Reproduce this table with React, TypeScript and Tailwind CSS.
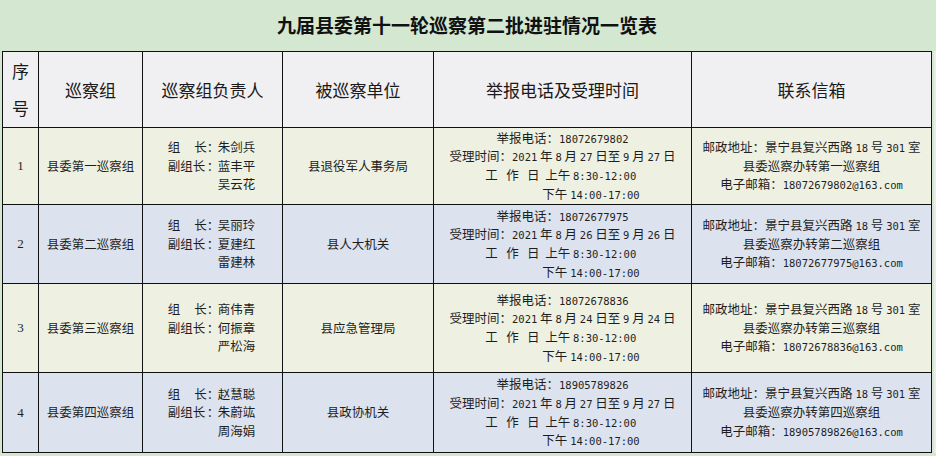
const groups = [
  {
    no: '1',
    name: '县委第一巡察组',
    leader: '朱剑兵',
    deputies: ['蓝丰平', '吴云花'],
    unit: '县退役军人事务局',
    phone: '18072679802',
    from: '8 月 27 日',
    to: '9 月 27 日',
    groupName: '第一巡察组',
    bg: 'bg-[#eef1e2]',
    h: 'h-[77px]',
  },
  {
    no: '2',
    name: '县委第二巡察组',
    leader: '吴丽玲',
    deputies: ['夏建红', '雷建林'],
    unit: '县人大机关',
    phone: '18072677975',
    from: '8 月 26 日',
    to: '9 月 26 日',
    groupName: '第二巡察组',
    bg: 'bg-[#dce3ef]',
    h: 'h-[79px]',
  },
  {
    no: '3',
    name: '县委第三巡察组',
    leader: '商伟青',
    deputies: ['何振章', '严松海'],
    unit: '县应急管理局',
    phone: '18072678836',
    from: '8 月 24 日',
    to: '9 月 24 日',
    groupName: '第三巡察组',
    bg: 'bg-[#eef1e2]',
    h: 'h-[89px]',
  },
  {
    no: '4',
    name: '县委第四巡察组',
    leader: '赵慧聪',
    deputies: ['朱蔚竑', '周海娟'],
    unit: '县政协机关',
    phone: '18905789826',
    from: '8 月 27 日',
    to: '9 月 27 日',
    groupName: '第四巡察组',
    bg: 'bg-[#dce3ef]',
    h: 'h-[80px]',
  },
]

const font = "font-['Noto_Sans_CJK_SC',sans-serif]"

// half-width runs (digits, latin) get a narrow mono face, like the original sheet
function T({ children }: { children: string }) {
  const parts = children.split(/([0-9A-Za-z@.:\-]+)/)
  return (
    <>
      {parts.map((p, i) =>
        i % 2 === 1 ? (
          <span key={i} className="font-['DejaVu_Sans_Mono',monospace] text-[10.5px] leading-[10px]">
            {p}
          </span>
        ) : (
          p
        ),
      )}
    </>
  )
}

function Leaders({ leader, deputies }: { leader: string; deputies: string[] }) {
  return (
    <div className="inline-flex flex-col text-left leading-[18.5px]">
      <div className="flex">
        <span className="flex w-[39px] justify-between">
          <span>组</span>
          <span>长</span>
        </span>
        <span className="w-[11px]">：</span>
        <span>{leader}</span>
      </div>
      <div className="flex">
        <span className="w-[39px]">副组长</span>
        <span className="w-[11px]">：</span>
        <span>{deputies[0]}</span>
      </div>
      <div className="pl-[50px]">{deputies[1]}</div>
    </div>
  )
}

export default function App() {
  return (
    <div className={`w-[936px] h-[456px] overflow-hidden bg-[#d3e7d1] text-[#1e1e1e] ${font}`}>
      {/* Title */}
      <div className="flex h-[51px] items-center justify-center pr-[2px] text-[19px] font-bold text-[#111]">
        九届县委第十一轮巡察第二批进驻情况一览表
      </div>

      <div className="flex">
        <div className="w-[2px]" />
        <table className="w-[929px] table-fixed border-collapse text-[12.5px]">
          <colgroup>
            <col className="w-[36px]" />
            <col className="w-[104px]" />
            <col className="w-[140px]" />
            <col className="w-[151px]" />
            <col className="w-[258px]" />
            <col className="w-[240px]" />
          </colgroup>
          <thead>
            <tr className="h-[76px] bg-[#f0f0f2] text-[17px] text-[#1a1a1a]">
              <th className="border border-[#111] p-0 font-normal">
                <div className="flex flex-col items-center gap-[13px] leading-[24px]">
                  <span>序</span>
                  <span>号</span>
                </div>
              </th>
              <th className="border border-[#111] p-0 font-normal">巡察组</th>
              <th className="border border-[#111] p-0 font-normal">巡察组负责人</th>
              <th className="border border-[#111] p-0 font-normal">被巡察单位</th>
              <th className="border border-[#111] p-0 font-normal">举报电话及受理时间</th>
              <th className="border border-[#111] p-0 font-normal">联系信箱</th>
            </tr>
          </thead>
          <tbody>
            {groups.map((g) => (
              <tr key={g.no} className={`${g.bg} ${g.h}`}>
                <td className="border border-[#111] p-0 text-center font-['Liberation_Serif',serif] text-[13px]">
                  {g.no}
                </td>
                <td className="border border-[#111] p-0 text-center">{g.name}</td>
                <td className="border border-[#111] p-0 pr-[2px] text-center">
                  <Leaders leader={g.leader} deputies={g.deputies} />
                </td>
                <td className="border border-[#111] p-0 text-center">{g.unit}</td>
                <td className="border border-[#111] p-0 text-center leading-[18.7px]">
                  <div>
                    <T>{`举报电话：${g.phone}`}</T>
                  </div>
                  <div className="whitespace-nowrap">
                    <T>{`受理时间：2021 年 ${g.from}至 ${g.to}`}</T>
                  </div>
                  <div className="inline-flex flex-col text-left">
                    <span className="whitespace-pre">
                      <T>{'工   作   日  上午 8:30-12:00'}</T>
                    </span>
                    <span className="pl-[57px]">
                      <T>{'下午 14:00-17:00'}</T>
                    </span>
                  </div>
                </td>
                <td className="border border-[#111] p-0 text-center leading-[18.7px]">
                  <div className="whitespace-nowrap">
                    <T>{'邮政地址：景宁县复兴西路 18 号 301 室'}</T>
                  </div>
                  <div>县委巡察办转{g.groupName}</div>
                  <div>
                    <T>{`电子邮箱：${g.phone}@163.com`}</T>
                  </div>
                </td>
              </tr>
            ))}
          </tbody>
        </table>
        <div className="ml-[2px] flex-1 bg-[#e9ece8]" />
      </div>
    </div>
  )
}
